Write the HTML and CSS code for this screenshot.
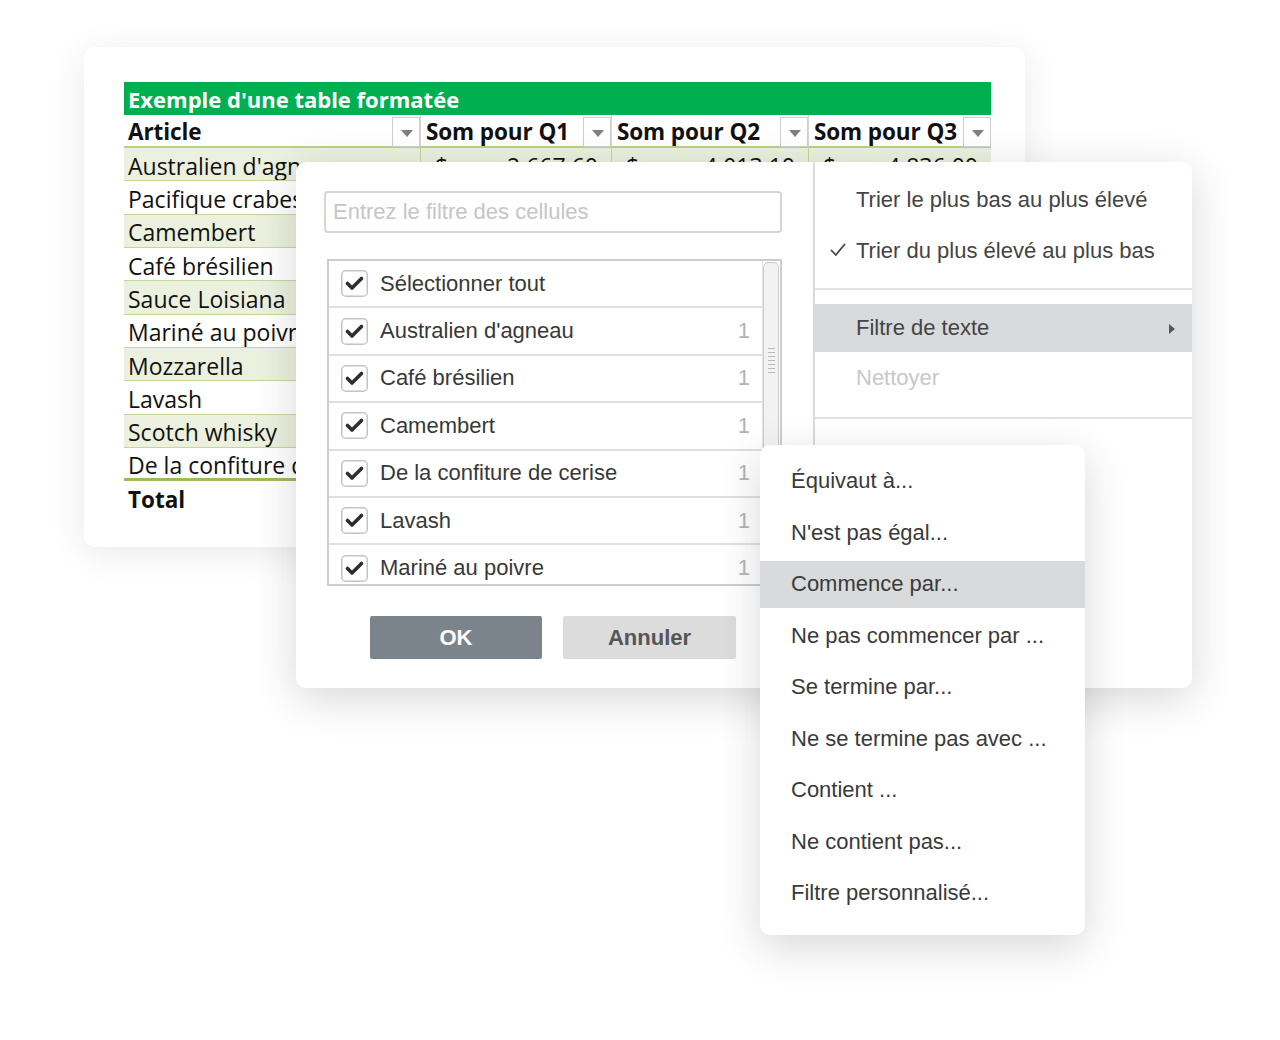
FILE: index.html
```html
<!DOCTYPE html>
<html lang="fr">
<head>
<meta charset="utf-8">
<title>Filtre</title>
<link rel="stylesheet" href="styles.css">
</head>
<body>
<div class="stage">
  <div class="card table-card">
    <div class="xtable">
      <div class="title">Exemple d'une table formatée</div>
      <div class="hcell"><span>Article</span><span class="dd"></span></div>
      <div class="hcell sep"><span>Som pour Q1</span><span class="dd"></span></div>
      <div class="hcell sep"><span>Som pour Q2</span><span class="dd"></span></div>
      <div class="hcell sep"><span>Som pour Q3</span><span class="dd"></span></div>

      <div class="cell g">Australien d'agneau</div>
      <div class="cell g val"><span>$</span><span>2,667.60</span></div>
      <div class="cell g val"><span>$</span><span>4,013.10</span></div>
      <div class="cell g val"><span>$</span><span>4,836.00</span></div>

      <div class="cell">Pacifique crabes</div><div class="cell val"></div><div class="cell val"></div><div class="cell val"></div>
      <div class="cell g">Camembert</div><div class="cell g val"></div><div class="cell g val"></div><div class="cell g val"></div>
      <div class="cell">Café brésilien</div><div class="cell val"></div><div class="cell val"></div><div class="cell val"></div>
      <div class="cell g">Sauce Loisiana</div><div class="cell g val"></div><div class="cell g val"></div><div class="cell g val"></div>
      <div class="cell">Mariné au poivre</div><div class="cell val"></div><div class="cell val"></div><div class="cell val"></div>
      <div class="cell g">Mozzarella</div><div class="cell g val"></div><div class="cell g val"></div><div class="cell g val"></div>
      <div class="cell">Lavash</div><div class="cell val"></div><div class="cell val"></div><div class="cell val"></div>
      <div class="cell g">Scotch whisky</div><div class="cell g val"></div><div class="cell g val"></div><div class="cell g val"></div>
      <div class="cell last">De la confiture de cerise</div><div class="cell last val"></div><div class="cell last val"></div><div class="cell last val"></div>
      <div class="cell total">Total</div><div class="cell total"></div><div class="cell total"></div><div class="cell total"></div>
    </div>
  </div>

  <div class="card dialog">
    <div class="left">
      <div class="search">Entrez le filtre des cellules</div>
      <div class="list">
        <div class="rows">
          <div class="row"><svg class="cb" viewBox="0 0 27 27"><rect x="0.75" y="0.75" width="25.5" height="25.5" rx="4" fill="#fff" stroke="#c4c4c4" stroke-width="1.5"/><path d="M6.5 13.5 L11 18 L20.5 8.5" fill="none" stroke="#2e2e2e" stroke-width="3.6" stroke-linecap="round" stroke-linejoin="round"/></svg><span class="lbl">Sélectionner tout</span></div>
          <div class="row"><svg class="cb" viewBox="0 0 27 27"><rect x="0.75" y="0.75" width="25.5" height="25.5" rx="4" fill="#fff" stroke="#c4c4c4" stroke-width="1.5"/><path d="M6.5 13.5 L11 18 L20.5 8.5" fill="none" stroke="#2e2e2e" stroke-width="3.6" stroke-linecap="round" stroke-linejoin="round"/></svg><span class="lbl">Australien d'agneau</span><span class="cnt">1</span></div>
          <div class="row"><svg class="cb" viewBox="0 0 27 27"><rect x="0.75" y="0.75" width="25.5" height="25.5" rx="4" fill="#fff" stroke="#c4c4c4" stroke-width="1.5"/><path d="M6.5 13.5 L11 18 L20.5 8.5" fill="none" stroke="#2e2e2e" stroke-width="3.6" stroke-linecap="round" stroke-linejoin="round"/></svg><span class="lbl">Café brésilien</span><span class="cnt">1</span></div>
          <div class="row"><svg class="cb" viewBox="0 0 27 27"><rect x="0.75" y="0.75" width="25.5" height="25.5" rx="4" fill="#fff" stroke="#c4c4c4" stroke-width="1.5"/><path d="M6.5 13.5 L11 18 L20.5 8.5" fill="none" stroke="#2e2e2e" stroke-width="3.6" stroke-linecap="round" stroke-linejoin="round"/></svg><span class="lbl">Camembert</span><span class="cnt">1</span></div>
          <div class="row"><svg class="cb" viewBox="0 0 27 27"><rect x="0.75" y="0.75" width="25.5" height="25.5" rx="4" fill="#fff" stroke="#c4c4c4" stroke-width="1.5"/><path d="M6.5 13.5 L11 18 L20.5 8.5" fill="none" stroke="#2e2e2e" stroke-width="3.6" stroke-linecap="round" stroke-linejoin="round"/></svg><span class="lbl">De la confiture de cerise</span><span class="cnt">1</span></div>
          <div class="row"><svg class="cb" viewBox="0 0 27 27"><rect x="0.75" y="0.75" width="25.5" height="25.5" rx="4" fill="#fff" stroke="#c4c4c4" stroke-width="1.5"/><path d="M6.5 13.5 L11 18 L20.5 8.5" fill="none" stroke="#2e2e2e" stroke-width="3.6" stroke-linecap="round" stroke-linejoin="round"/></svg><span class="lbl">Lavash</span><span class="cnt">1</span></div>
          <div class="row"><svg class="cb" viewBox="0 0 27 27"><rect x="0.75" y="0.75" width="25.5" height="25.5" rx="4" fill="#fff" stroke="#c4c4c4" stroke-width="1.5"/><path d="M6.5 13.5 L11 18 L20.5 8.5" fill="none" stroke="#2e2e2e" stroke-width="3.6" stroke-linecap="round" stroke-linejoin="round"/></svg><span class="lbl">Mariné au poivre</span><span class="cnt">1</span></div>
        </div>
        <div class="scroll"><div class="thumb"><div class="grip"></div></div></div>
      </div>
      <div class="buttons">
        <div class="btn ok">OK</div>
        <div class="btn cancel">Annuler</div>
      </div>
    </div>
    <div class="right">
      <div class="group">
        <div class="mi">Trier le plus bas au plus élevé</div>
        <div class="mi"><svg class="tick" viewBox="0 0 16 14"><path d="M1.5 7.5 L5.8 12 L14.5 1.5" fill="none" stroke="#444" stroke-width="1.8" stroke-linecap="round" stroke-linejoin="round"/></svg>Trier du plus élevé au plus bas</div>
      </div>
      <div class="group g2">
        <div class="mi hl">Filtre de texte<svg class="arrow" viewBox="0 0 6 10"><path d="M0 0 L6 5 L0 10 Z" fill="#555"/></svg></div>
        <div class="mi dis">Nettoyer</div>
      </div>
    </div>
  </div>

  <div class="card submenu">
    <div class="si">Équivaut à...</div>
    <div class="si">N'est pas égal...</div>
    <div class="si hl">Commence par...</div>
    <div class="si">Ne pas commencer par ...</div>
    <div class="si">Se termine par...</div>
    <div class="si">Ne se termine pas avec ...</div>
    <div class="si">Contient ...</div>
    <div class="si">Ne contient pas...</div>
    <div class="si">Filtre personnalisé...</div>
  </div>
</div>
</body>
</html>
```

FILE: styles.css
```css
* { box-sizing: border-box; }
html, body { margin: 0; padding: 0; background: #fff; }
.stage {
  position: relative;
  width: 1280px;
  height: 1040px;
  overflow: hidden;
  font-family: "Liberation Sans", Arial, sans-serif;
}
.card {
  position: absolute;
  background: #fff;
  border-radius: 10px;
}

/* ---------- table card ---------- */
.table-card {
  left: 84px;
  top: 47px;
  width: 941px;
  height: 500px;
  padding: 35px 0 0 40px;
  box-shadow: 0 6px 36px rgba(0,0,0,0.09);
  z-index: 1;
}
.xtable {
  display: grid;
  grid-template-columns: 296px 191px 197px 183px;
  grid-template-rows: 33px 33px repeat(11, 33.333px);
  font-family: "Open Sans", Lato, sans-serif;
  font-size: 23px;
  color: #111;
}
.title {
  grid-column: 1 / -1;
  background: #00b050;
  color: #fff;
  font-weight: 700;
  font-size: 22px;
  padding: 1px 0 0 4px;
  display: flex;
  align-items: center;
}
.hcell {
  display: flex;
  align-items: center;
  justify-content: space-between;
  padding: 1px 0 0 4px;
  font-weight: 700;
  font-size: 22.5px;
  border-bottom: 2px solid #b9d187;
  white-space: nowrap;
  letter-spacing: -0.1px;
}
.hcell.sep { padding-left: 5px; border-left: 1px solid #d6d6d6; }
.dd {
  width: 28px;
  height: 30px;
  border: 1px solid #cfcfcf;
  background: #fff;
  position: relative;
  align-self: flex-start;
  margin-top: 1px;
  flex: none;
}
.dd::after {
  content: "";
  position: absolute;
  left: 8px;
  top: 12px;
  border-left: 6px solid transparent;
  border-right: 6px solid transparent;
  border-top: 7px solid #7f7f7f;
}
.cell {
  display: flex;
  align-items: center;
  padding: 3px 0 0 4px;
  border-bottom: 1px solid #c4d79b;
  white-space: nowrap;
  overflow: hidden;
}
.cell.g { background: #ebf1de; }
.cell.val {
  justify-content: space-between;
  padding: 3px 13px 0 14px;
  border-left: 1px solid #c4d79b;
}
.cell.last { border-bottom: 3px solid #9bbb59; }
.cell.total { font-weight: 700; font-size: 22.5px; border-bottom: none; }

/* ---------- filter dialog ---------- */
.dialog {
  left: 296px;
  top: 162px;
  width: 896px;
  height: 526px;
  display: flex;
  box-shadow: 0 10px 44px rgba(0,0,0,0.16);
  z-index: 2;
  overflow: hidden;
  font-size: 22px;
  color: #383838;
}
.left {
  width: 519px;
  border-right: 2px solid #dadada;
  padding: 29px 0 0 28px;
}
.search {
  width: 458px;
  height: 42px;
  border: 2px solid #d6d6d6;
  border-radius: 4px;
  color: #c6c6c6;
  padding-left: 7px;
  display: flex;
  align-items: center;
  line-height: 1;
}
.list {
  margin: 26px 0 0 3px;
  width: 455px;
  height: 327px;
  border: 2px solid #cdcdcd;
  display: flex;
  overflow: hidden;
}
.rows { width: 433px; }
.row {
  height: 47.4px;
  border-bottom: 2px solid #e0e0e0;
  display: flex;
  align-items: center;
  padding: 0 12px 0 12px;
}
.cb { width: 27px; height: 27px; flex: none; }
.lbl { margin-left: 12px; flex: 1; white-space: nowrap; }
.cnt { color: #b3b3b3; }
.scroll {
  flex: 1;
  padding: 1px 1px 0 0;
  border-left: 1px solid #e4e4e4;
}
.thumb {
  height: 300px;
  background: #f2f2f2;
  border: 1px solid #cccccc;
  border-radius: 5px;
  display: flex;
  justify-content: center;
  padding-top: 85px;
}
.grip {
  width: 7px;
  height: 26px;
  background: repeating-linear-gradient(to bottom, #b9b9b9 0 1px, transparent 1px 4px);
}
.buttons {
  display: flex;
  gap: 21px;
  margin: 30px 0 0 46px;
}
.btn {
  height: 43px;
  display: flex;
  align-items: center;
  justify-content: center;
  font-weight: 700;
  border-radius: 2px;
}
.btn.ok { width: 172px; background: #7c848b; color: #fff; }
.btn.cancel { width: 173px; background: #dcdcdc; color: #555; }

.right {
  flex: 1;
  color: #444;
}
.group {
  padding: 12px 0 12px 0;
  border-bottom: 2px solid #e2e2e2;
}
.group.g2 { padding: 14px 0 13px 0; }
.mi {
  height: 51px;
  display: flex;
  align-items: center;
  padding-left: 41px;
  position: relative;
  white-space: nowrap;
}
.g2 .mi { height: 48px; }
.g2 .mi.dis { height: 52px; }
.tick {
  position: absolute;
  left: 15px;
  top: 18px;
  width: 16px;
  height: 14px;
}
.mi.hl { background: #d9dadc; }
.mi.dis { color: #c8c8c8; }
.arrow {
  position: absolute;
  right: 17px;
  top: 20px;
  width: 6px;
  height: 10px;
}

/* ---------- submenu ---------- */
.submenu {
  left: 760px;
  top: 445px;
  width: 325px;
  height: 490px;
  padding: 12.5px 0 18.5px 0;
  display: flex;
  flex-direction: column;
  gap: 4.5px;
  box-shadow: 0 12px 44px rgba(0,0,0,0.16);
  z-index: 3;
  font-size: 22px;
  color: #3a3a3a;
}
.si {
  height: 47px;
  display: flex;
  align-items: center;
  padding-left: 31px;
  white-space: nowrap;
}
.si.hl { background: #d9dadc; }
```
